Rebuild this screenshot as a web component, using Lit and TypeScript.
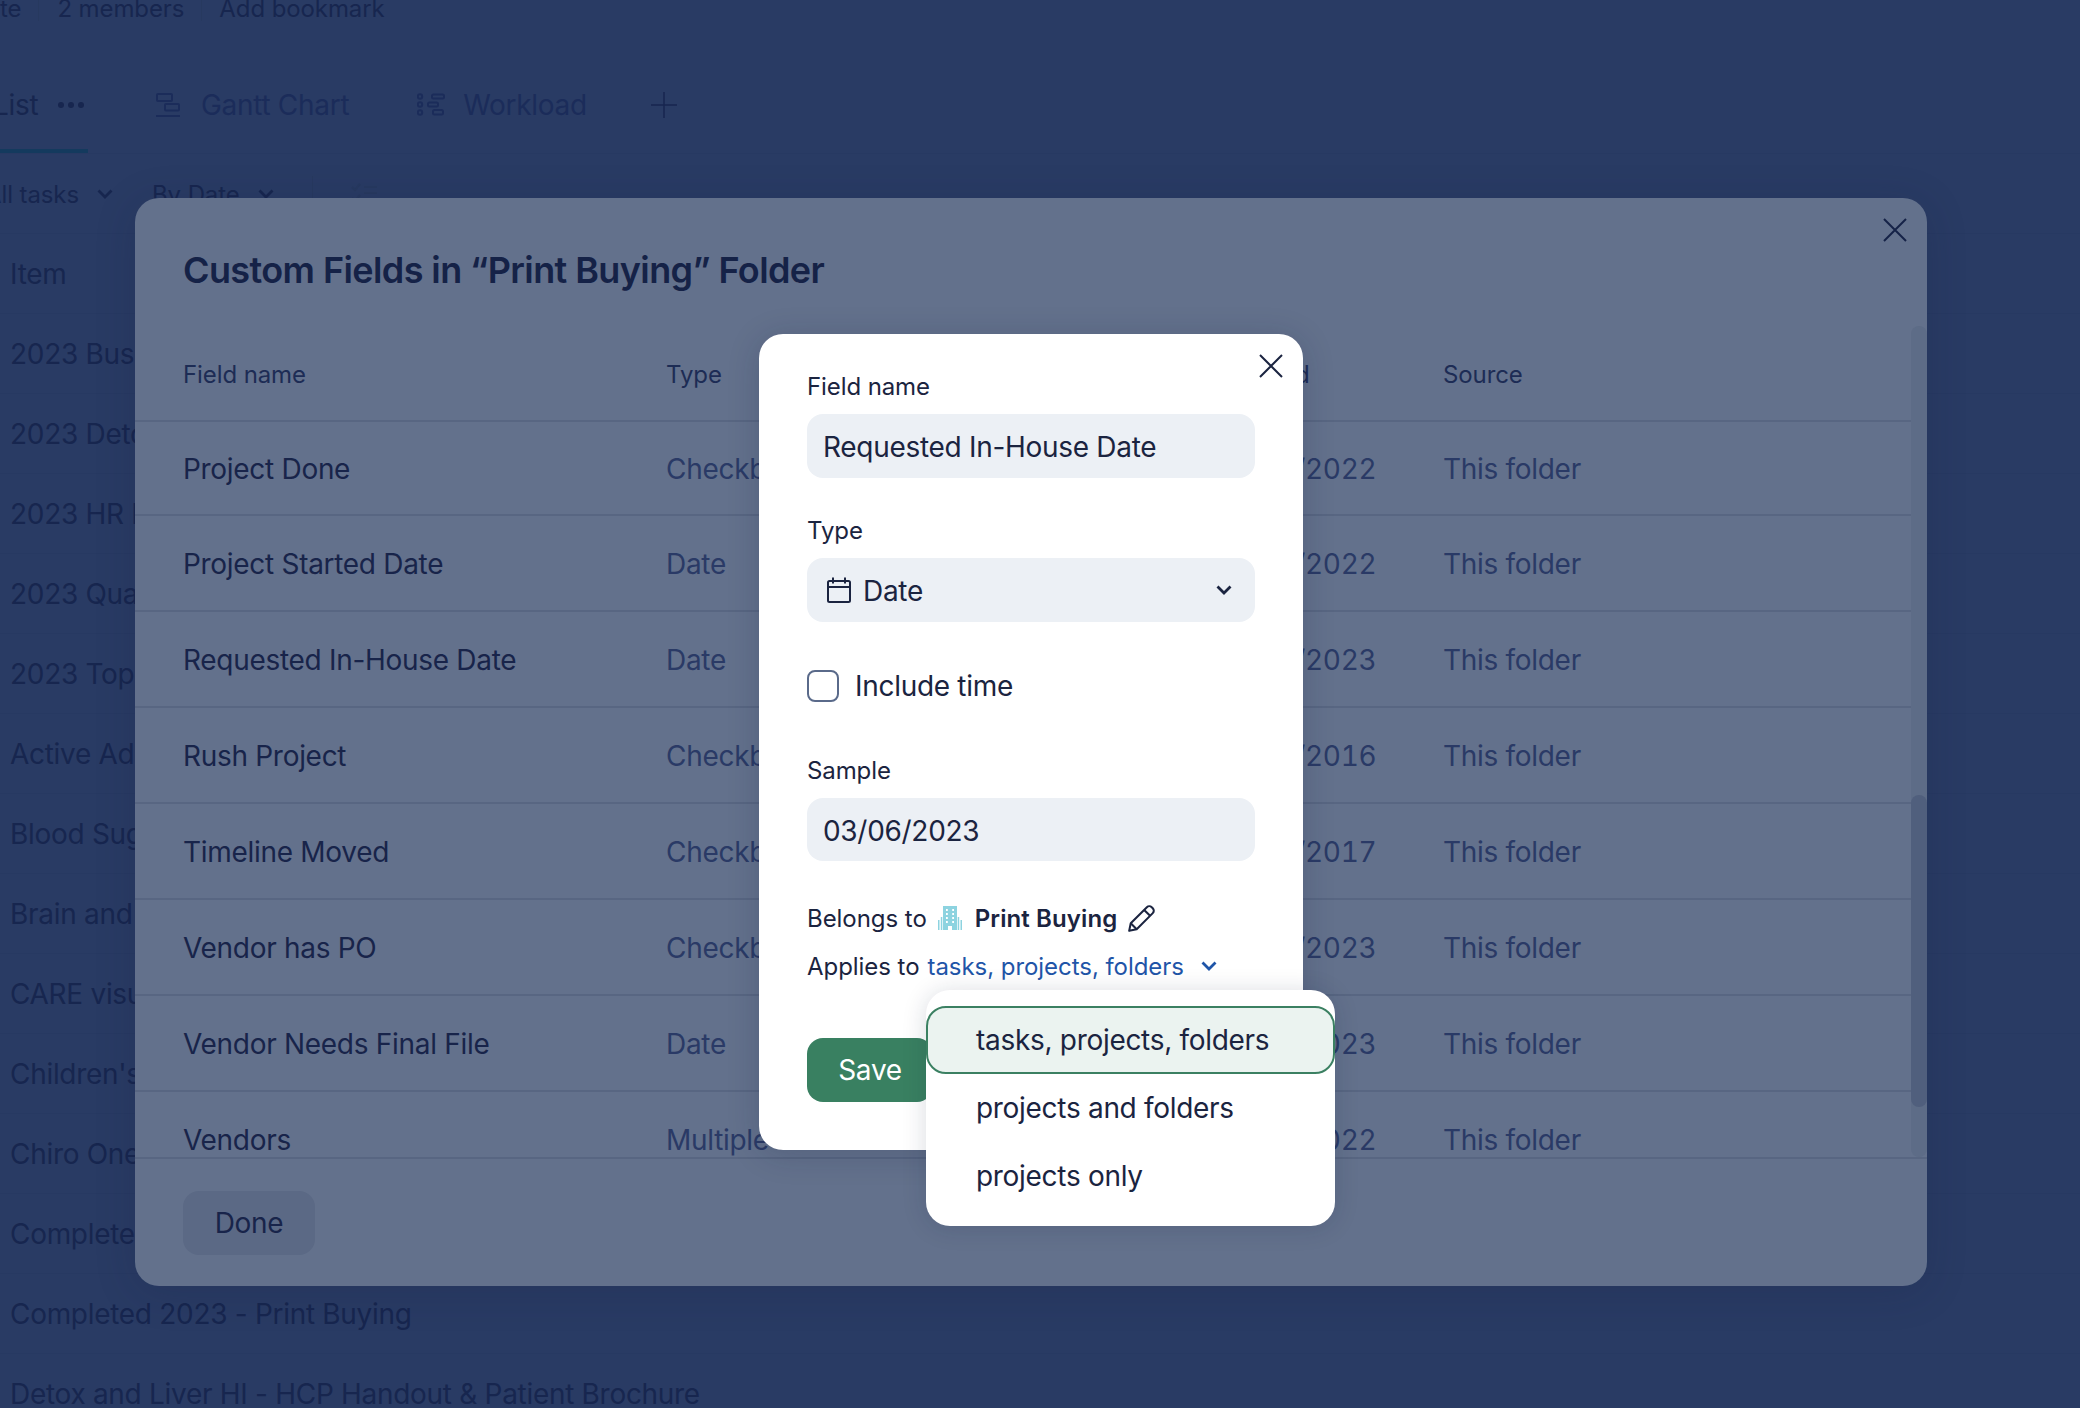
import { LitElement, css, html, svg } from 'lit';
import { customElement } from 'lit/decorators.js';

const listItems = [
    '2023 Business Cards',
    '2023 Detox Brochure',
    '2023 HR Materials',
    '2023 Quarterly Mailer',
    '2023 Top Sellers',
    'Active Ads',
    'Blood Sugar Handout',
    'Brain and Memory',
    'CARE visual aid',
    "Children's Health",
    'Chiro One Mailer',
    'Completed 2022',
    'Completed 2023 - Print Buying',
    'Detox and Liver HI - HCP Handout & Patient Brochure',
];

const fields = [
    { name: 'Project Done', type: 'Checkbox', created: '03/14/2022' },
    { name: 'Project Started Date', type: 'Date', created: '03/14/2022' },
    { name: 'Requested In-House Date', type: 'Date', created: '01/09/2023' },
    { name: 'Rush Project', type: 'Checkbox', created: '06/21/2016' },
    { name: 'Timeline Moved', type: 'Checkbox', created: '08/02/2017' },
    { name: 'Vendor has PO', type: 'Checkbox', created: '02/17/2023' },
    { name: 'Vendor Needs Final File', type: 'Date', created: '02/17/2023' },
    { name: 'Vendors', type: 'Multiple select', created: '11/30/2022' },
];

const closeIcon = svg`<path d="M1 1l22 22M23 1L1 23" fill="none" stroke="currentColor" stroke-width="2" />`;
const chevron = svg`<path d="M1.500 1.500L8 8l6.500-6.500" fill="none" stroke="currentColor" stroke-width="2.800" />`;

@customElement('app-root')
export class AppRoot extends LitElement {
    static styles = css`
        :host {
            display: block;
            width: 2080px;
            height: 1408px;
            font-family: Inter, 'Liberation Sans', sans-serif;
            font-size: 28px;
            letter-spacing: -0.3px;
            color: #17264f;
        }

        .page {
            position: relative;
            display: flex;
            flex-direction: column;
            width: 2080px;
            height: 1408px;
            overflow: hidden;
            background: #293b64;
        }

        /* page behind the scrim */
        .meta {
            display: flex;
            align-items: center;
            flex: none;
            height: 24px;
            margin-top: -3px;
            font-size: 24px;
            line-height: 24px;
            letter-spacing: -0.1px;
        }

        .meta span + span {
            margin-left: 17px;
            padding-left: 18px;
            border-left: 1px solid #27395f;
        }

        .meta span:last-child {
            padding-left: 17px;
        }

        .tabs {
            display: flex;
            align-items: center;
            flex: none;
            height: 133px;
            box-sizing: border-box;
            padding-top: 36px;
            border-bottom: 1px solid #273962;
            color: #1b2c5a;
        }

        .tab {
            display: flex;
            align-items: center;
            gap: 21px;
            margin-left: 68px;
        }

        .tab svg {
            flex: none;
        }

        .tab.workload {
            gap: 18px;
        }

        .tab.active {
            position: relative;
            align-self: stretch;
            width: 88px;
            margin-left: 0;
            margin-top: -36px;
            padding-top: 36px;
            gap: 20px;
            color: #17264f;
        }

        .tab.active .name {
            margin-left: -7px;
        }

        .tab.active::after {
            content: '';
            position: absolute;
            left: 0;
            right: 0;
            bottom: 0;
            height: 4px;
            background: #143a5e;
        }

        .dots {
            display: flex;
            gap: 4px;
        }

        .dots i {
            width: 6px;
            height: 6px;
            border-radius: 50%;
            background: #17264f;
        }

        .plus {
            margin-left: 64px;
        }

        .filters {
            display: flex;
            align-items: center;
            flex: none;
            height: 80px;
            box-sizing: border-box;
            padding-top: 1px;
            border-bottom: 1px solid #273962;
            font-size: 24px;
            letter-spacing: -0.1px;
        }

        .filter {
            display: flex;
            align-items: center;
            gap: 18px;
        }

        .filter:first-child {
            margin-left: -15px;
        }

        .filter + .filter {
            margin-left: 39px;
        }

        .filters .sep {
            width: 1px;
            height: 36px;
            margin: 0 38px;
            background: #27395f;
        }

        .list-row {
            display: flex;
            align-items: center;
            flex: none;
            height: 80px;
            box-sizing: border-box;
            padding: 0 10px;
            border-bottom: 1px solid #273962;
            white-space: nowrap;
        }

        /* custom fields modal */
        .modal {
            position: absolute;
            left: 135px;
            top: 198px;
            display: flex;
            flex-direction: column;
            width: 1792px;
            height: 1088px;
            border-radius: 24px;
            overflow: hidden;
            background: #63718c;
            box-shadow: 0 6px 40px rgba(20, 30, 60, 0.18);
        }

        .modal-head {
            flex: none;
            display: flex;
            align-items: center;
            height: 128px;
            padding: 16px 48px 0;
            box-sizing: border-box;
            font-size: 36px;
            font-weight: 600;
            letter-spacing: -0.6px;
            color: #152247;
        }

        .close {
            position: absolute;
            color: #152247;
        }

        .modal > .close {
            left: 1748px;
            top: 20px;
        }

        .table-wrap {
            position: relative;
            flex: none;
            height: 831px;
            overflow: hidden;
            border-bottom: 2px solid #586682;
        }

        .grid-row {
            display: grid;
            grid-template-columns: 483px 548px 229px 1fr;
            align-items: center;
            width: 1776px;
            height: 96px;
            box-sizing: border-box;
            padding: 2px 0 0 48px;
            border-bottom: 2px solid #586682;
            white-space: nowrap;
        }

        .grid-row.head {
            height: 96px;
            font-size: 24px;
            letter-spacing: -0.1px;
            color: #1d2c55;
        }

        .grid-row.first {
            height: 94px;
        }

        .created-head {
            margin-left: 6px;
        }

        .muted {
            color: #2a3a66;
        }

        .date {
            font-variant-numeric: tabular-nums;
        }

        .name-cell {
            color: #18244a;
        }

        .track {
            position: absolute;
            top: 0;
            right: 0;
            bottom: 0;
            width: 16px;
            border-radius: 8px;
            background: #5d6c87;
        }

        .thumb {
            position: absolute;
            left: 0;
            right: 0;
            top: 469px;
            height: 312px;
            border-radius: 8px;
            background: #505f7d;
        }

        .modal-foot {
            flex: 1;
            padding: 32px 48px;
        }

        .done {
            width: 132px;
            height: 64px;
            border: 0;
            border-radius: 16px;
            background: #5b6985;
            color: #18244a;
            font: inherit;
            letter-spacing: inherit;
        }

        /* edit field dialog */
        .dialog {
            position: absolute;
            left: 759px;
            top: 334px;
            display: flex;
            flex-direction: column;
            width: 544px;
            height: 816px;
            box-sizing: border-box;
            padding: 37px 48px 48px;
            border-radius: 24px;
            background: #fff;
            color: #1b2440;
            box-shadow: 0 4px 32px rgba(20, 30, 60, 0.2);
        }

        .dialog > .close {
            left: 500px;
            top: 20px;
            color: #1b2440;
        }

        label {
            display: block;
            font-size: 24px;
            line-height: 32px;
            letter-spacing: -0.1px;
        }

        .input {
            display: flex;
            align-items: center;
            width: 448px;
            height: 64px;
            box-sizing: border-box;
            margin-top: 12px;
            padding: 2px 16px 0;
            border-radius: 16px;
            background: #ecf0f5;
        }

        .first-input {
            margin-top: 11px;
        }

        .type-label {
            margin-top: 37px;
        }

        .type-label + .input {
            margin-top: 11px;
        }

        .select {
            gap: 12px;
            padding: 2px 23px 0 20px;
        }

        .select svg {
            margin-top: -2px;
        }

        .select .value {
            flex: 1;
        }

        .check-row {
            display: flex;
            align-items: center;
            gap: 16px;
            margin-top: 47px;
        }

        .checkbox {
            width: 32px;
            height: 32px;
            box-sizing: border-box;
            border: 2px solid #5a6a8a;
            border-radius: 8px;
        }

        .sample-label {
            margin-top: 52px;
        }

        .sample-label + .input {
            margin-top: 11px;
        }

        .info-row {
            display: flex;
            align-items: center;
            height: 36px;
            font-size: 24px;
            letter-spacing: -0.05px;
            white-space: nowrap;
        }

        .belongs {
            margin-top: 39px;
        }

        .applies {
            margin-top: 12px;
        }

        .belongs svg.building {
            margin: 0 13px 0 11px;
        }

        .belongs b {
            font-weight: 600;
            letter-spacing: 0.1px;
        }

        .belongs svg.pencil {
            margin-left: 10px;
        }

        .link {
            margin-left: 8px;
            color: #1f55a8;
        }

        .applies svg {
            margin-left: 17px;
            color: #1f55a8;
        }

        .save {
            width: 126px;
            height: 64px;
            margin-top: 54px;
            border: 0;
            border-radius: 16px;
            background: #398061;
            color: #fff;
            font: inherit;
            letter-spacing: inherit;
        }

        /* applies-to menu */
        .menu {
            position: absolute;
            left: 926px;
            top: 990px;
            width: 409px;
            height: 236px;
            box-sizing: border-box;
            padding: 16px 0;
            border-radius: 24px;
            background: #fff;
            color: #1b2440;
            box-shadow: 0 2px 24px rgba(20, 30, 60, 0.16);
        }

        .option {
            display: flex;
            align-items: center;
            height: 68px;
            box-sizing: border-box;
            padding: 0 50px;
        }

        .option.selected {
            padding: 0 48px;
            border: 2px solid #3b8062;
            border-radius: 20px;
            background: #ebf3f0;
        }
    `;

    private renderGanttIcon() {
        return html`<svg width="24" height="24" viewBox="0 0 24 24" fill="none" stroke="currentColor" stroke-width="2">
            <rect x="1" y="1" width="15" height="7" rx="1" />
            <rect x="9" y="11" width="14" height="6.5" rx="1" />
            <path d="M0 23h24" />
        </svg>`;
    }

    private renderWorkloadIcon() {
        return html`<svg width="28" height="24" viewBox="0 0 28 24" fill="none" stroke="currentColor" stroke-width="2">
            <circle cx="3" cy="3.5" r="2.2" />
            <circle cx="3" cy="11.5" r="2.2" />
            <circle cx="3" cy="19.5" r="2.2" />
            <rect x="15" y="1.5" width="12" height="4" rx="1.5" />
            <rect x="11" y="9.5" width="10" height="4" rx="1.5" />
            <rect x="16" y="17" width="10" height="4.5" rx="1.5" />
        </svg>`;
    }

    private renderBuildingIcon() {
        return html`<svg class="building" width="24" height="24" viewBox="0 0 24 24" fill="#8dd3e0">
            <path
                fill-rule="evenodd"
                d="M5 0h14v24h-5v-4h-4v4H5zM8 3v2h1.800V3zM14.200 3v2H16V3zM8 7v2h1.800V7zM14.200 7v2H16V7zM8 11v2h1.800v-2zM14.200 11v2H16v-2zM8 15v2h1.800v-2zM14.200 15v2H16v-2z"
            />
            <path d="M0 14h1.500v10H0zM2.800 11h1.500v13H2.800zM19.700 11h1.500v13h-1.500zM22.500 14H24v10h-1.500z" />
        </svg>`;
    }

    private renderPencilIcon() {
        return html`<svg class="pencil" width="29" height="29" viewBox="0 0 27 27" fill="none" stroke="currentColor" stroke-width="1.900" stroke-linejoin="round">
            <path d="M2 25l1.500-7L18.500 3a3.200 3.200 0 0 1 4.500 0l1 1a3.200 3.200 0 0 1 0 4.500L9 23.500z" />
            <path d="M16 5.500l5.500 5.500M3.500 18L9 23.500" />
        </svg>`;
    }

    private renderCalendarIcon() {
        return html`<svg width="24" height="26" viewBox="0 0 24 26" fill="none" stroke="currentColor" stroke-width="2">
            <rect x="1" y="4" width="22" height="21" rx="1.500" />
            <path d="M1 10h22M6 0.500v6M18 0.500v6" />
        </svg>`;
    }

    private renderBackground() {
        return html`
            <div class="meta">
                <span>te</span>
                <span>2 members</span>
                <span>Add bookmark</span>
            </div>
            <div class="tabs">
                <div class="tab active">
                    <span class="name">List</span>
                    <span class="dots"><i></i><i></i><i></i></span>
                </div>
                <div class="tab">${this.renderGanttIcon()}<span>Gantt Chart</span></div>
                <div class="tab workload">${this.renderWorkloadIcon()}<span>Workload</span></div>
                <svg class="plus" width="26" height="26" viewBox="0 0 26 26" stroke="#17264f" stroke-width="1.500">
                    <path d="M13 0v26M0 13h26" />
                </svg>
            </div>
            <div class="filters">
                <div class="filter">
                    <span>All tasks</span>
                    <svg width="16" height="10" viewBox="0 0 16 10">${chevron}</svg>
                </div>
                <div class="filter">
                    <span>By Date</span>
                    <svg width="16" height="10" viewBox="0 0 16 10">${chevron}</svg>
                </div>
                <span class="sep"></span>
                <svg width="26" height="22" viewBox="0 0 26 22" fill="none" stroke="#27395f" stroke-width="2">
                    <path d="M1 4l3 3 5-6M1 15l3 3 5-6M13 4h13M13 10h13M13 17h13" />
                </svg>
            </div>
            <div class="list-row">Item</div>
            ${listItems.map((item) => html`<div class="list-row">${item}</div>`)}
        `;
    }

    private renderModal() {
        return html`
            <section class="modal">
                <div class="modal-head">Custom Fields in “Print Buying” Folder</div>
                <svg class="close" width="24" height="24" viewBox="0 0 24 24">${closeIcon}</svg>
                <div class="table-wrap">
                    <div class="grid-row head">
                        <span>Field name</span>
                        <span>Type</span>
                        <span class="created-head">Created</span>
                        <span>Source</span>
                    </div>
                    ${fields.map(
                        (field, index) => html`<div class="grid-row ${index === 0 ? 'first' : ''}">
                            <span class="name-cell">${field.name}</span>
                            <span class="muted">${field.type}</span>
                            <span class="muted date">${field.created}</span>
                            <span class="muted">This folder</span>
                        </div>`,
                    )}
                    <div class="track"><div class="thumb"></div></div>
                </div>
                <div class="modal-foot"><button class="done" type="button">Done</button></div>
            </section>
        `;
    }

    private renderDialog() {
        return html`
            <section class="dialog">
                <svg class="close" width="24" height="24" viewBox="0 0 24 24">${closeIcon}</svg>
                <label>Field name</label>
                <div class="input first-input">Requested In-House Date</div>
                <label class="type-label">Type</label>
                <div class="input select">
                    ${this.renderCalendarIcon()}
                    <span class="value">Date</span>
                    <svg width="16" height="10" viewBox="0 0 16 10">${chevron}</svg>
                </div>
                <div class="check-row">
                    <span class="checkbox"></span>
                    <span>Include time</span>
                </div>
                <label class="sample-label">Sample</label>
                <div class="input">03/06/2023</div>
                <div class="info-row belongs">
                    <span>Belongs to</span>
                    ${this.renderBuildingIcon()}
                    <b>Print Buying</b>
                    ${this.renderPencilIcon()}
                </div>
                <div class="info-row applies">
                    <span>Applies to</span>
                    <span class="link">tasks, projects, folders</span>
                    <svg width="16" height="10" viewBox="0 0 16 10">${chevron}</svg>
                </div>
                <button class="save" type="button">Save</button>
            </section>
        `;
    }

    render() {
        return html`
            <div class="page">
                ${this.renderBackground()} ${this.renderModal()} ${this.renderDialog()}
                <div class="menu">
                    <div class="option selected">tasks, projects, folders</div>
                    <div class="option">projects and folders</div>
                    <div class="option">projects only</div>
                </div>
            </div>
        `;
    }
}
